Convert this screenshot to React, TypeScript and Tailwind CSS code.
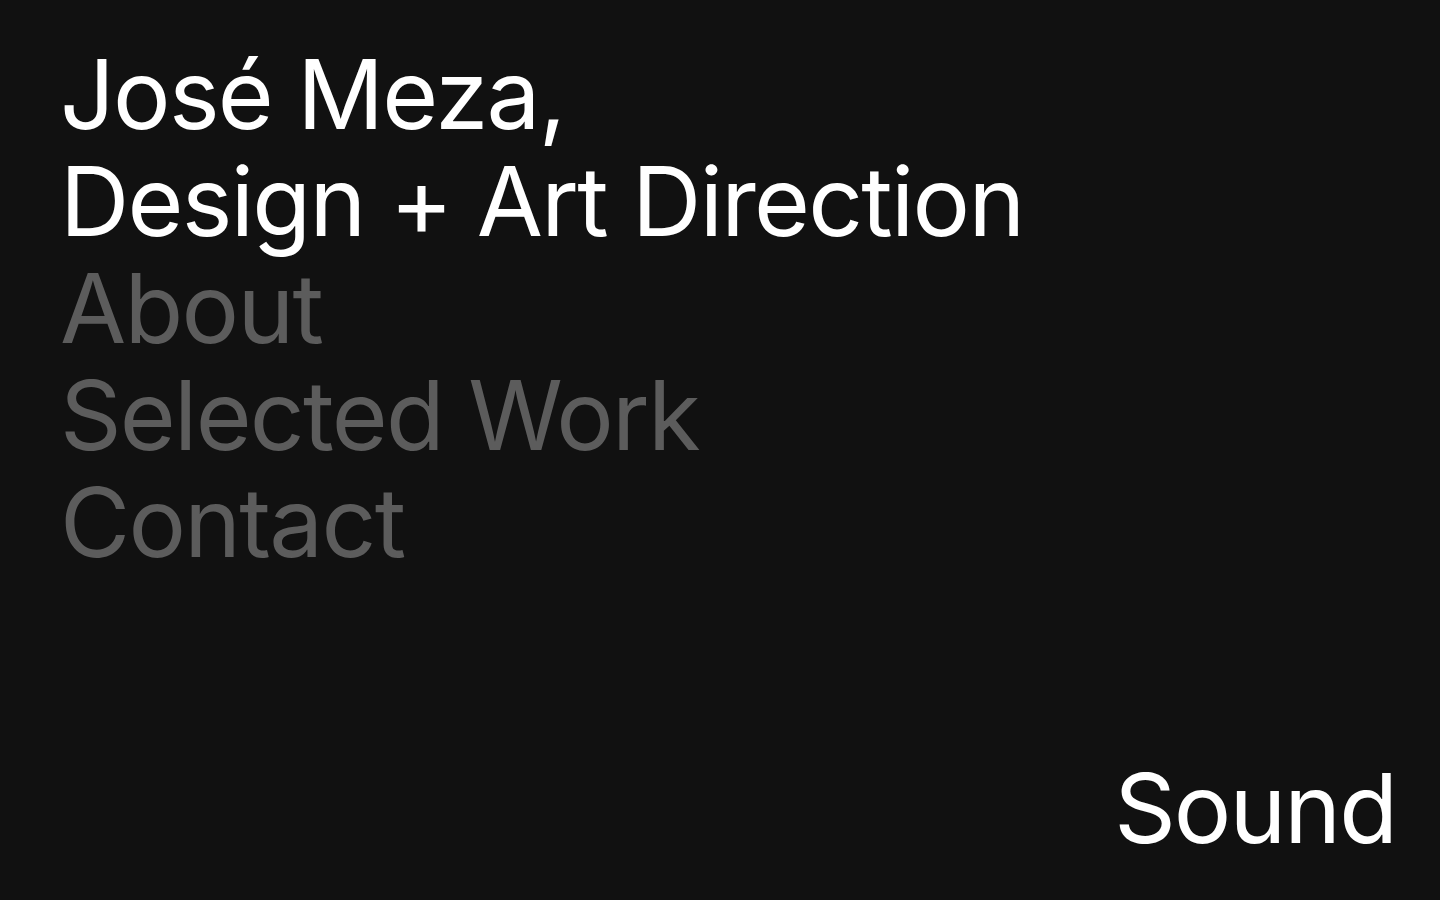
const nav = ["About", "Selected Work", "Contact"];

export default function App() {
    return (
        <div
            className="h-screen w-full bg-[#111111] text-white flex flex-col justify-between pt-[41px] pb-[38px] pl-[60px] pr-[44px] overflow-hidden"
            style={{ fontFamily: "Inter, 'Noto Sans', sans-serif" }}
        >
            <header className="text-[96px] leading-[107px] tracking-[-0.018em]">
                <h1 className="font-normal">
                    José Meza,
                    <br />
                    Design + Art Direction
                </h1>
                <nav className="flex flex-col text-[#5c5c5c]">
                    {nav.map((item) => (
                        <a key={item} href="#" className="hover:text-white transition-colors">
                            {item}
                        </a>
                    ))}
                </nav>
            </header>

            <div className="flex justify-end">
                <button className="text-[96px] leading-[107px] tracking-[-0.02em] text-white">
                    Sound
                </button>
            </div>
        </div>
    );
}
